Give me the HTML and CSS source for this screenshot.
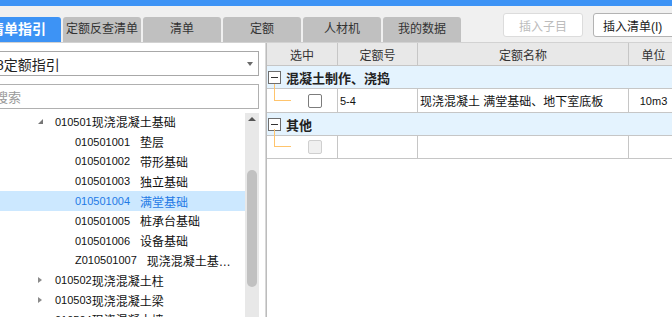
FILE: index.html
```html
<!DOCTYPE html>
<html lang="zh-CN">
<head>
<meta charset="utf-8">
<title>清单指引</title>
<link rel="stylesheet" href="styles.css">
</head>
<body>
<div class="topbar"></div>
<div class="toolbar">
  <div class="tabs">
    <div class="tab active">清单指引</div>
    <div class="tab">定额反查清单</div>
    <div class="tab">清单</div>
    <div class="tab">定额</div>
    <div class="tab">人材机</div>
    <div class="tab">我的数据</div>
  </div>
  <div class="actions">
    <button class="btn disabled">插入子目</button>
    <button class="btn insert">插入清单(I)</button>
  </div>
</div>
<div class="main">
  <div class="left">
    <div class="select"><span class="select-text">8定额指引</span><span class="arrow"></span></div>
    <div class="search">搜索</div>
    <div class="tree">
      <div class="tree-list">
        <div class="row l1"><span class="twisty"><span class="tri-open"></span></span><span class="num">010501</span>现浇混凝土基础</div>
        <div class="row l2"><span class="code">010501001</span>垫层</div>
        <div class="row l2"><span class="code">010501002</span>带形基础</div>
        <div class="row l2"><span class="code">010501003</span>独立基础</div>
        <div class="row l2 selected"><span class="code">010501004</span>满堂基础</div>
        <div class="row l2"><span class="code">010501005</span>桩承台基础</div>
        <div class="row l2"><span class="code">010501006</span>设备基础</div>
        <div class="row l2"><span class="code">Z010501007</span>现浇混凝土基…</div>
        <div class="row l1"><span class="twisty"><span class="tri-closed"></span></span><span class="num">010502</span>现浇混凝土柱</div>
        <div class="row l1"><span class="twisty"><span class="tri-closed"></span></span><span class="num">010503</span>现浇混凝土梁</div>
        <div class="row l1"><span class="twisty"><span class="tri-closed"></span></span><span class="num">010504</span>现浇混凝土墙</div>
      </div>
      <div class="scrollbar">
        <span class="sb-up"></span>
        <span class="sb-thumb"></span>
      </div>
    </div>
  </div>
  <div class="right">
    <div class="grid-row head">
      <div class="cell">选中</div>
      <div class="cell">定额号</div>
      <div class="cell">定额名称</div>
      <div class="cell">单位</div>
    </div>
    <div class="group-row">
      <span class="toggle"></span><span class="group-title">混凝土制作、浇捣</span>
    </div>
    <div class="grid-row data">
      <div class="cell check-cell"><span class="connector c1"></span><span class="checkbox"></span></div>
      <div class="cell code-cell">5-4</div>
      <div class="cell name-cell">现浇混凝土 满堂基础、地下室底板</div>
      <div class="cell unit-cell">10m3</div>
    </div>
    <div class="group-row">
      <span class="toggle"></span><span class="group-title">其他</span>
    </div>
    <div class="grid-row data empty">
      <div class="cell check-cell"><span class="connector c2"></span><span class="checkbox disabled"></span></div>
      <div class="cell"></div>
      <div class="cell"></div>
      <div class="cell"></div>
    </div>
  </div>
</div>
</body>
</html>
```
FILE: styles.css
```css
html, body {
  margin: 0;
  padding: 0;
}
body {
  width: 672px;
  height: 317px;
  overflow: hidden;
  background: #fff;
  color: #222;
  font-family: "Liberation Sans", "Noto Sans CJK SC", sans-serif;
  font-size: 12px;
}

.topbar {
  height: 6px;
  background: #3d93f5;
}

.toolbar {
  height: 36px;
  background: #f0f0f0;
  border-bottom: 1px solid #d2d2d2;
  display: flex;
}

.tabs {
  display: flex;
  gap: 2px;
  align-self: flex-end;
}
.tab {
  width: 78px;
  height: 25px;
  line-height: 25px;
  text-align: center;
  background: #c0c0c0;
  color: #333;
  border-radius: 3px 3px 0 0;
  white-space: nowrap;
}
.tab.active {
  width: 86px;
  margin-left: -25px;
  background: #3d93f5;
  color: #fff;
  font-weight: bold;
  font-size: 14px;
}

.actions {
  display: flex;
  gap: 10px;
  margin-left: 42px;
  margin-top: 7px;
  align-self: flex-start;
}
.btn {
  box-sizing: border-box;
  height: 24px;
  width: 80px;
  padding: 0;
  border: 1px solid #b3b3b3;
  border-radius: 3px;
  background: #fff;
  color: #222;
  font-family: inherit;
  font-size: 12px;
  white-space: nowrap;
}
.btn.disabled {
  border-color: #dcdcdc;
  color: #bcbcbc;
}
.btn.insert {
  width: 92px;
  text-align: left;
  padding-left: 9px;
}

.main {
  display: flex;
  height: 274px;
}

.left {
  box-sizing: border-box;
  width: 266px;
  border-right: 1px solid #d8d8d8;
  display: flex;
  flex-direction: column;
  overflow: hidden;
  background: #fff;
}

.select {
  box-sizing: border-box;
  flex: none;
  margin: 8px 0 0 -10px;
  width: 269px;
  height: 25px;
  border: 1px solid #a8a8a8;
  display: flex;
  align-items: center;
  padding-left: 5px;
  font-size: 14px;
  color: #222;
}
.select-text {
  flex: 1;
}
.arrow {
  width: 0;
  height: 0;
  border-left: 3.5px solid transparent;
  border-right: 3.5px solid transparent;
  border-top: 4px solid #6a6a6a;
  margin-right: 5px;
}

.search {
  box-sizing: border-box;
  flex: none;
  margin: 8px 0 0 -10px;
  width: 269px;
  height: 25px;
  border: 1px solid #b0b0b0;
  display: flex;
  align-items: center;
  padding-left: 4px;
  font-size: 13px;
  color: #9a9a9a;
}

.tree {
  display: flex;
  margin-top: 3px;
  flex: 1;
  min-height: 0;
}
.tree-list {
  flex: 1;
  overflow: hidden;
}
.row {
  height: 19.8px;
  display: flex;
  align-items: center;
  white-space: nowrap;
  color: #111;
}
.row.l1 {
  padding-left: 38px;
}
.row.l2 {
  padding-left: 75px;
}
.row.selected {
  background: #cce8ff;
  color: #1f7ae6;
}
.twisty {
  width: 17px;
  display: flex;
  align-items: center;
}
.tri-open {
  width: 0;
  height: 0;
  border-left: 5px solid transparent;
  border-bottom: 5px solid #767676;
}
.tri-closed {
  width: 0;
  height: 0;
  border-top: 3.5px solid transparent;
  border-bottom: 3.5px solid transparent;
  border-left: 4.5px solid #8a8a8a;
}
.num {
  font-size: 11px;
}
.code {
  font-size: 11px;
  margin-right: 10px;
}

.scrollbar {
  flex: none;
  width: 14px;
  margin-right: 6px;
  margin-top: 1px;
  background: #e8e8e8;
  display: flex;
  flex-direction: column;
  align-items: center;
}
.sb-up {
  margin-top: 4px;
  width: 0;
  height: 0;
  border-left: 4px solid transparent;
  border-right: 4px solid transparent;
  border-bottom: 4px solid #555;
}
.sb-thumb {
  margin-top: 49px;
  width: 10px;
  height: 117px;
  border-radius: 5px;
  background: #c1c1c1;
}

.right {
  flex: 1;
  border-left: 1px solid #bcbcbc;
  overflow: hidden;
  background: #fff;
}

.grid-row {
  display: grid;
  grid-template-columns: 71px 80px 211px 50px;
  box-sizing: border-box;
  border-bottom: 1px solid #c6c6c6;
}
.cell {
  box-sizing: border-box;
  border-right: 1px solid #c6c6c6;
  display: flex;
  align-items: center;
  white-space: nowrap;
  overflow: hidden;
}
.head {
  height: 23px;
  background: #e8e8e8;
}
.head .cell {
  justify-content: center;
  color: #333;
}
.data {
  height: 24px;
  color: #111;
}
.data.empty {
  height: 23px;
}
.check-cell {
  position: relative;
  overflow: visible;
}
.code-cell {
  padding-left: 2px;
  font-size: 11px;
}
.name-cell {
  padding-left: 2px;
}
.unit-cell {
  justify-content: center;
  font-size: 11px;
}

.group-row {
  box-sizing: border-box;
  height: 23px;
  background: #e4f3fe;
  border-bottom: 1px solid #c6c6c6;
  display: flex;
  align-items: center;
  padding-left: 1px;
}
.toggle {
  box-sizing: border-box;
  width: 13px;
  height: 13px;
  border: 1px solid #6e6e6e;
  background: #fff;
  display: flex;
  align-items: center;
  justify-content: center;
}
.toggle::before {
  content: "";
  width: 7px;
  height: 1px;
  background: #333;
}
.group-title {
  margin-left: 5px;
  font-size: 13px;
  font-weight: bold;
  color: #222;
}

.connector {
  position: absolute;
  left: 7px;
  width: 17px;
  border-left: 1px solid #ffc46c;
  border-bottom: 1px solid #ffc46c;
  box-sizing: border-box;
}
.connector.c1 {
  top: -5px;
  height: 17px;
}
.connector.c2 {
  top: -7px;
  height: 18px;
}
.checkbox {
  box-sizing: border-box;
  width: 14px;
  height: 14px;
  margin-left: 41px;
  border: 1px solid #7c7c7c;
  border-radius: 2px;
  background: #fff;
}
.checkbox.disabled {
  border-color: #cfcfcf;
  background: #f0f0f0;
}
```
